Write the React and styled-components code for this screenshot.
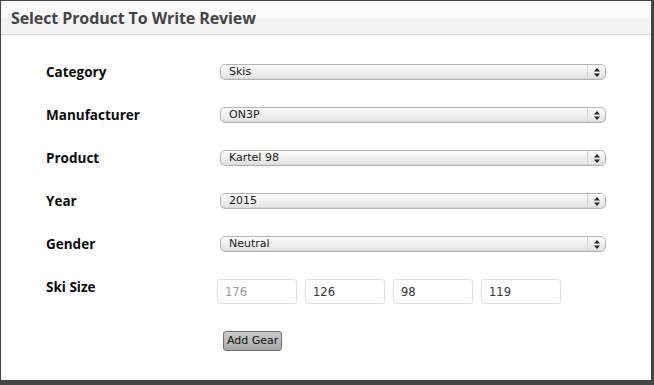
import React from 'react';
import styled, { createGlobalStyle } from 'styled-components';

const GlobalStyle = createGlobalStyle`
  html, body {
    margin: 0;
    padding: 0;
    background: #464646;
  }
  body {
    font-family: "Open Sans", "Liberation Sans", sans-serif;
  }
`

const Frame = styled.div`
  width: 654px;
  height: 385px;
  box-sizing: border-box;
  padding: 1px 3px 5px 1px;
`

const Panel = styled.div`
  height: 100%;
  background: #fff;
  display: flex;
  flex-direction: column;
`

const Header = styled.div`
  height: 34px;
  box-sizing: border-box;
  border-bottom: 1px solid #dcdcdc;
  background: linear-gradient(#fdfdfd 0%, #fbfbfb 45%, #f3f3f3 60%, #f3f3f3 100%);
  padding: 0 10px;
  display: flex;
  align-items: center;
`

const Title = styled.h2`
  margin: 0;
  font-size: 16px;
  font-weight: 700;
  color: #444;
  letter-spacing: -0.1px;
`

const Form = styled.div`
  padding: 29px 0 0 45px;
  display: flex;
  flex-direction: column;
  gap: 27px;
`

const Row = styled.div`
  display: flex;
  align-items: flex-start;
`

const Label = styled.div`
  width: 174px;
  flex-shrink: 0;
  font-size: 13.5px;
  font-weight: 700;
  line-height: 16px;
  color: #0a0a0a;
`

const SelectWrap = styled.div`
  position: relative;
  width: 386px;
  height: 16px;
`

const Select = styled.select`
  appearance: none;
  -webkit-appearance: none;
  display: block;
  width: 100%;
  height: 16px;
  box-sizing: border-box;
  margin: 0;
  padding: 0 0 0 8px;
  border: 1px solid #b4b4b4;
  border-radius: 5px;
  background: linear-gradient(#fdfdfd 0%, #efefef 50%, #e2e2e2 100%);
  box-shadow: inset 0 -1px 0 #d6d6d6;
  font-family: "Lucida Grande", "DejaVu Sans", "Liberation Sans", sans-serif;
  font-size: 11px;
  line-height: 14px;
  color: #1a1a1a;
  outline: none;
`

const Arrows = styled.span`
  position: absolute;
  top: 1px;
  right: 1px;
  bottom: 1px;
  width: 17px;
  border-left: 1px solid #d0d0d0;
  display: flex;
  align-items: center;
  justify-content: center;
  pointer-events: none;
`

const SizeInputs = styled.div`
  display: flex;
  gap: 8px;
  margin-left: -3px;
`

const SizeInput = styled.input`
  display: block;
  width: 80px;
  height: 25px;
  box-sizing: border-box;
  margin: 0;
  padding: 0 7px;
  border: 1px solid #dedede;
  border-radius: 3px;
  background: #fff;
  font-family: "DejaVu Sans", "Liberation Sans", sans-serif;
  font-size: 11.5px;
  color: ${({ $muted }) => ($muted ? '#999' : '#333')};
  outline: none;
`

const ButtonRow = styled.div`
  padding-left: 177px;
`

const Button = styled.button`
  display: block;
  height: 20px;
  padding: 0 3px;
  border: 1px solid #707070;
  border-radius: 3px;
  background: linear-gradient(#c9c9c9, #a9a9a9);
  font-family: "DejaVu Sans", "Liberation Sans", sans-serif;
  font-size: 11px;
  color: #111;
  line-height: 18px;
`

const ArrowIcon = () => (
  <svg width="6" height="9" viewBox="0 0 6 9">
    <path d="M3 0 L6 3.5 L0 3.5 Z" fill="#222" />
    <path d="M3 9 L6 5.5 L0 5.5 Z" fill="#222" />
  </svg>
)

const fields = [
  { label: 'Category', value: 'Skis' },
  { label: 'Manufacturer', value: 'ON3P' },
  { label: 'Product', value: 'Kartel 98' },
  { label: 'Year', value: '2015' },
  { label: 'Gender', value: 'Neutral' },
]

const sizes = [
  { value: '176', muted: true },
  { value: '126' },
  { value: '98' },
  { value: '119' },
]

const App = () => {
  return (
    <Frame>
      <GlobalStyle />
      <Panel>
        <Header>
          <Title>Select Product To Write Review</Title>
        </Header>
        <Form>
          {fields.map((f) => (
            <Row key={f.label}>
              <Label>{f.label}</Label>
              <SelectWrap>
                <Select defaultValue={f.value}>
                  <option>{f.value}</option>
                </Select>
                <Arrows>
                  <ArrowIcon />
                </Arrows>
              </SelectWrap>
            </Row>
          ))}
          <Row>
            <Label>Ski Size</Label>
            <SizeInputs>
              {sizes.map((s, i) => (
                <SizeInput key={i} defaultValue={s.value} $muted={s.muted} />
              ))}
            </SizeInputs>
          </Row>
          <ButtonRow>
            <Button>Add Gear</Button>
          </ButtonRow>
        </Form>
      </Panel>
    </Frame>
  );
}

export default App;
